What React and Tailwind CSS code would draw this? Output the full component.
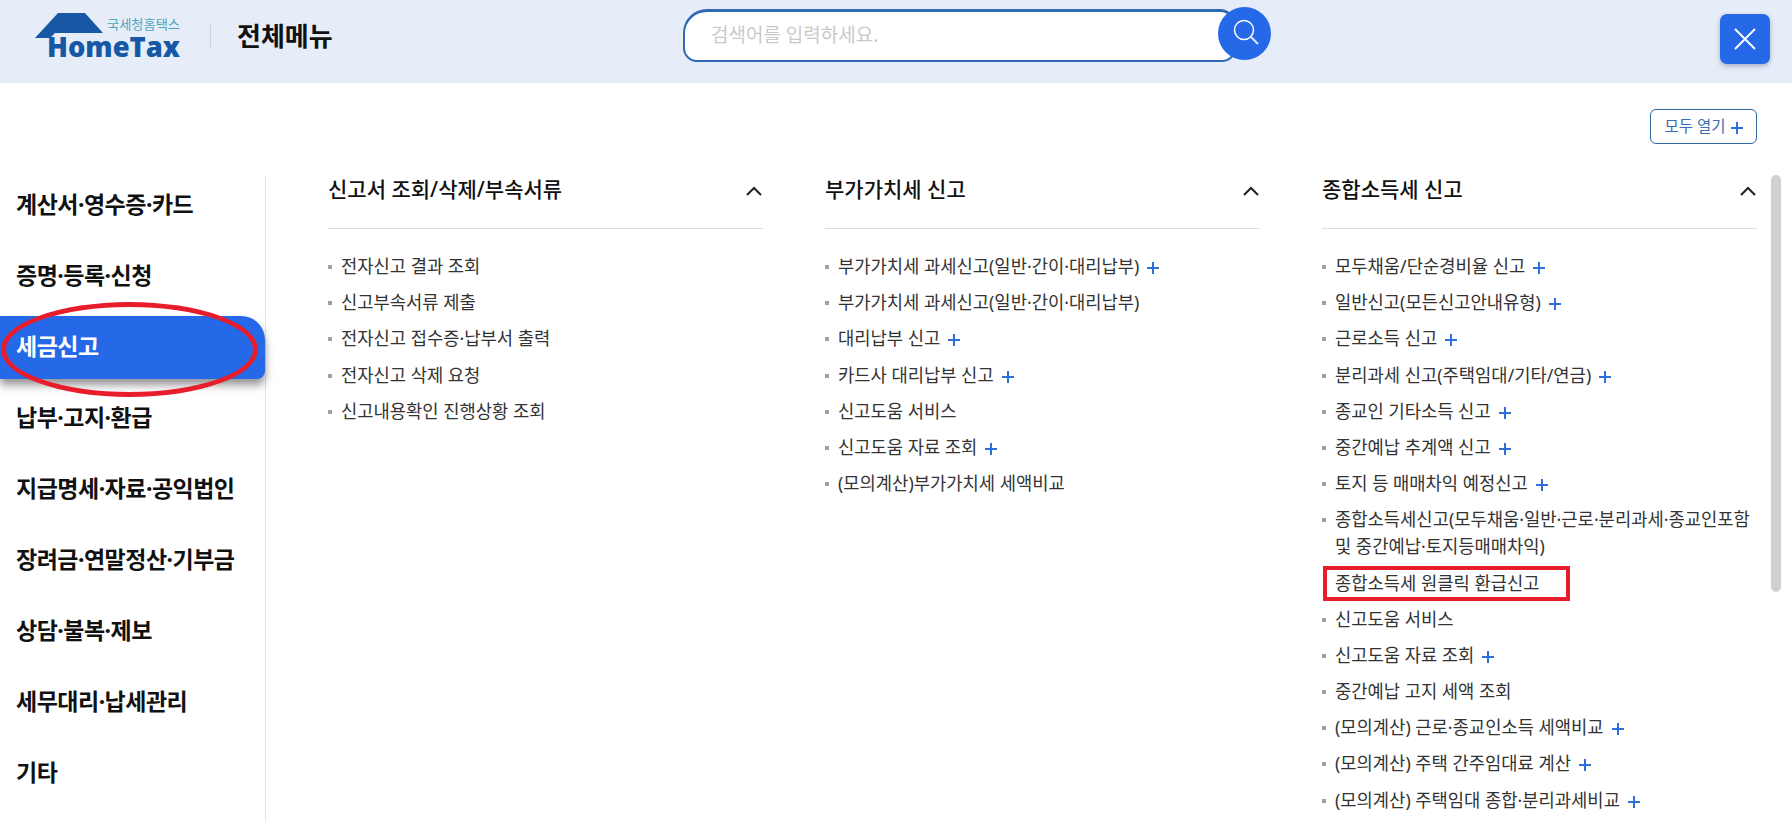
const sideMenus = [
  '계산서·영수증·카드',
  '증명·등록·신청',
  '세금신고',
  '납부·고지·환급',
  '지급명세·자료·공익법인',
  '장려금·연말정산·기부금',
  '상담·불복·제보',
  '세무대리·납세관리',
  '기타',
];

const columns = [
  {
    title: '신고서 조회/삭제/부속서류',
    items: [
      { label: '전자신고 결과 조회' },
      { label: '신고부속서류 제출' },
      { label: '전자신고 접수증·납부서 출력' },
      { label: '전자신고 삭제 요청' },
      { label: '신고내용확인 진행상황 조회' },
    ],
  },
  {
    title: '부가가치세 신고',
    items: [
      { label: '부가가치세 과세신고(일반·간이·대리납부)', plus: true },
      { label: '부가가치세 과세신고(일반·간이·대리납부)' },
      { label: '대리납부 신고', plus: true },
      { label: '카드사 대리납부 신고', plus: true },
      { label: '신고도움 서비스' },
      { label: '신고도움 자료 조회', plus: true },
      { label: '(모의계산)부가가치세 세액비교' },
    ],
  },
  {
    title: '종합소득세 신고',
    items: [
      { label: '모두채움/단순경비율 신고', plus: true },
      { label: '일반신고(모든신고안내유형)', plus: true },
      { label: '근로소득 신고', plus: true },
      { label: '분리과세 신고(주택임대/기타/연금)', plus: true },
      { label: '종교인 기타소득 신고', plus: true },
      { label: '중간예납 추계액 신고', plus: true },
      { label: '토지 등 매매차익 예정신고', plus: true },
      { label: '종합소득세신고(모두채움·일반·근로·분리과세·종교인포함 및 중간예납·토지등매매차익)' },
      { label: '종합소득세 원클릭 환급신고', marked: true },
      { label: '신고도움 서비스' },
      { label: '신고도움 자료 조회', plus: true },
      { label: '중간예납 고지 세액 조회' },
      { label: '(모의계산) 근로·종교인소득 세액비교', plus: true },
      { label: '(모의계산) 주택 간주임대료 계산', plus: true },
      { label: '(모의계산) 주택임대 종합·분리과세비교', plus: true },
    ],
  },
];

const PlusIcon = () => (
  <svg width="12" height="12" viewBox="0 0 12 12" className="relative top-[1px] inline-block shrink-0 align-baseline text-[#2f6fdb]">
    <path d="M6 0v12M0 6h12" stroke="currentColor" strokeWidth="2" fill="none" />
  </svg>
);

function Logo() {
  return (
    <svg width="146" height="56" viewBox="0 0 146 56" className="mt-[12px] shrink-0">
      <path d="M0 26 L23 1 H50 L68 21 H20 L15 26 Z" fill="#1658a5" />
      <text x="12" y="45" fontFamily="'Open Sans', sans-serif" fontWeight="800" fontSize="28" fill="#1658a5" textLength="133" lengthAdjust="spacingAndGlyphs">HomeTax</text>
      <text x="72" y="17" fontFamily="'Noto Sans CJK KR', sans-serif" fontSize="13" fill="#4ba8bf" textLength="73" lengthAdjust="spacingAndGlyphs">국세청홈택스</text>
    </svg>
  );
}

function MenuColumn({ title, items }) {
  return (
    <section className="w-[435px] shrink-0">
      <div className="flex h-[54px] items-start justify-between border-b border-[#dddddd] pr-[1px]">
        <h2 className="-mt-[2px] text-[21px] leading-[32px] font-medium text-[#111111]">{title}</h2>
        <svg width="16" height="10" viewBox="0 0 16 10" className="mt-[11px] text-[#222222]">
          <path d="M1 9 L8 2 L15 9" stroke="currentColor" strokeWidth="2" fill="none" />
        </svg>
      </div>
      <ul className="mt-[24px]">
        {items.map((item) => (
          <li key={item.label} className="relative pb-[9.2px] pl-[13px] text-[17.7px] leading-[27px] text-[#333333]">
            {!item.marked && <span className="absolute top-[12px] left-0 h-[4px] w-[4px] bg-[#a0a0a0]" />}
            <span>{item.label}</span>
            {item.plus && <span className="ml-[8px]"><PlusIcon /></span>}
            {item.marked && (
              <span className="absolute -top-[4px] left-[1px] h-[35px] w-[247px] border-[4px] border-[#e71d2b]" />
            )}
          </li>
        ))}
      </ul>
    </section>
  );
}

export default function App() {
  return (
    <div className="relative h-[821px] w-[1792px] overflow-hidden bg-white font-['Noto_Sans','Noto_Sans_CJK_KR',sans-serif]">
      <header className="flex h-[83px] items-start bg-[#e6edf8] pr-[22px] pl-[35px]">
        <Logo />
        <div className="mt-[23px] mr-[26px] ml-[29px] h-[25px] w-px bg-[#cfd4da]" />
        <h1 className="mt-[18px] w-[446px] text-[26px] leading-[36px] font-bold text-[#111111]">전체메뉴</h1>
        <div className="relative mt-[9px] flex h-[53px] w-[553px] items-center rounded-tl-[24px] rounded-tr-[16px] rounded-br-[14px] rounded-bl-[14px] border-[2px] border-t-[3px] border-[#2e69b5] bg-white pl-[26px]">
          <span className="-mt-[2px] text-[19px] text-[#c9c9c9]">검색어를 입력하세요.</span>
          <button className="absolute -top-[5px] -right-[37px] flex h-[53px] w-[53px] items-center justify-center rounded-full bg-[#2569e8]">
            <svg width="28" height="28" viewBox="0 0 28 28" fill="none" stroke="white" className="mb-[1px] ml-[3px]">
              <circle cx="12" cy="11" r="9.5" strokeWidth="1.5" />
              <path d="M19 18 L26 25" strokeWidth="2" stroke="#dfe8fb" />
            </svg>
          </button>
        </div>
        <button className="mt-[14px] ml-auto flex h-[50px] w-[50px] items-center justify-center rounded-[7px] bg-[#2569e8] shadow-[0_2px_5px_rgba(40,60,110,0.35)]">
          <svg width="22" height="22" viewBox="0 0 22 22" stroke="white" strokeWidth="1.8" fill="none">
            <path d="M1 1 L21 21 M21 1 L1 21" />
          </svg>
        </button>
      </header>

      <div className="flex justify-end pt-[26px] pr-[35px]">
        <button className="flex h-[35px] w-[107px] items-center justify-center gap-[5px] rounded-[6px] border border-[#2e69a5] text-[15.5px] text-[#3a6db5]">
          모두 열기
          <PlusIcon />
        </button>
      </div>

      <main className="mt-[31px] flex">
        <nav className="h-[700px] w-[266px] shrink-0 border-r border-[#e3e3e3]">
          <ul className="-mt-[1px] flex flex-col gap-[8px]">
            {sideMenus.map((menu) =>
              menu === '세금신고' ? (
                <li
                  key={menu}
                  className="flex h-[63px] items-center rounded-tr-[24px] rounded-br-[8px] bg-[#2569e8] pb-[3px] pl-[16px] text-[23px] font-bold tracking-[-0.5px] text-white shadow-[0_6px_8px_rgba(60,60,60,0.55)]"
                >
                  {menu}
                </li>
              ) : (
                <li key={menu} className="flex h-[63px] items-center pb-[3px] pl-[16px] text-[23px] font-bold tracking-[-0.5px] text-[#111111]">
                  {menu}
                </li>
              ),
            )}
          </ul>
        </nav>
        <div className="flex gap-[62px] pl-[62px]">
          {columns.map((col) => (
            <MenuColumn key={col.title} {...col} />
          ))}
        </div>
      </main>

      {/* scrollbar thumb */}
      <div className="absolute top-[175px] left-[1771px] h-[417px] w-[10px] rounded-[5px] bg-[#d0d0d0]" />

      {/* red ellipse annotation */}
      <div className="pointer-events-none absolute top-[302px] left-[1px] h-[95px] w-[257px] rounded-[50%] border-[5px] border-[#e71d2b]" />
    </div>
  );
}
